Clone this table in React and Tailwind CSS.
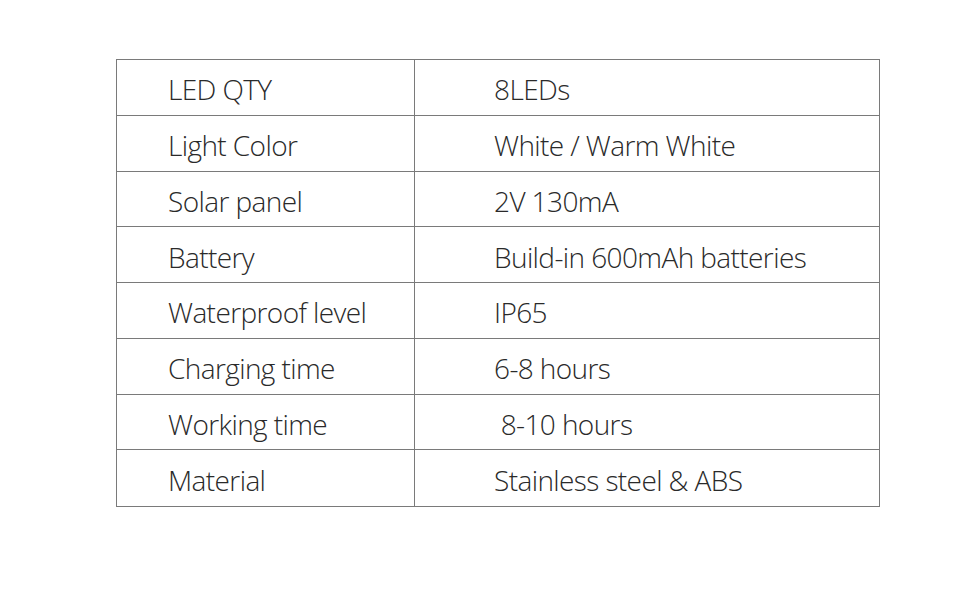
import React from 'react';

const SPECS = [
  ['LED QTY', '8LEDs'],
  ['Light Color', 'White / Warm White'],
  ['Solar panel', '2V 130mA'],
  ['Battery', 'Build-in 600mAh batteries'],
  ['Waterproof level', 'IP65'],
  ['Charging time', '6-8 hours'],
  ['Working time', '\u00a08-10 hours'],
  ['Material', 'Stainless steel & ABS'],
];

const App = () => {
  return (
    <div className="w-[960px] h-[596px] bg-white pt-[59px] pl-[116px]">
      <div
        className="w-[764px] border border-[#7a7a7a] text-[#2a2a2a] text-[28px] font-light tracking-[-0.6px]"
        style={{ fontFamily: '"Open Sans", "Liberation Sans", sans-serif' }}
      >
        {SPECS.map(([label, value], i) => (
          <div
            key={label}
            className={`grid grid-cols-[298px_1fr] h-[55.75px] ${i < SPECS.length - 1 ? 'border-b border-[#7a7a7a]' : ''}`}
          >
            <div className="border-r border-[#7a7a7a] pl-[51px] pt-[4px] flex items-center leading-none">
              {label}
            </div>
            <div className="pl-[79px] pt-[4px] flex items-center leading-none whitespace-pre">{value}</div>
          </div>
        ))}
      </div>
    </div>
  );
};

export default App;
